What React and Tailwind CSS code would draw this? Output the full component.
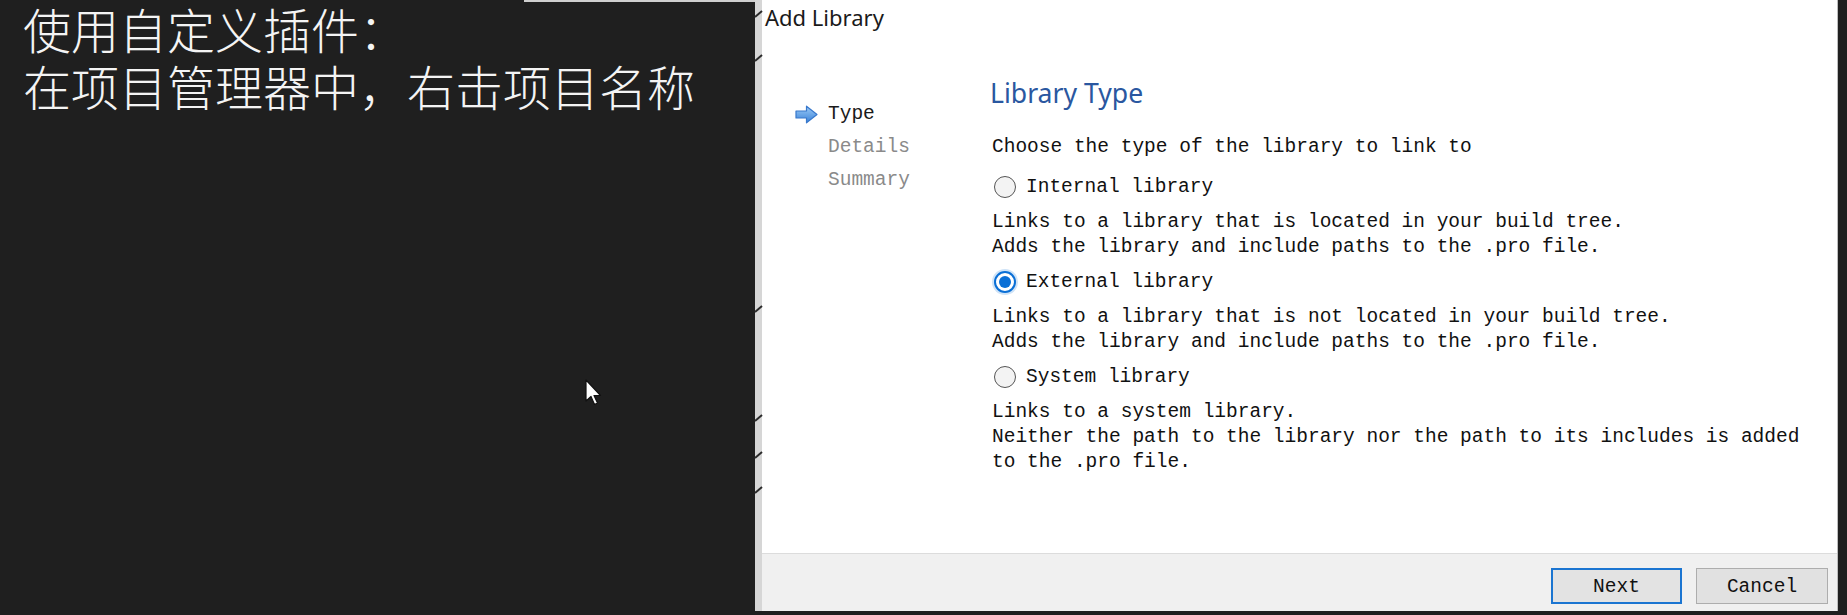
import React from "react";

const mono = { fontFamily: '"Liberation Mono", "DejaVu Sans Mono", monospace' };

function Radio({ checked }) {
  if (checked) {
    return (
      <span className="flex h-[22px] w-[22px] shrink-0 items-center justify-center rounded-full border-2 border-[#0a6fd6] bg-white shadow-[0_0_0_2px_#cfe3f7]">
        <span className="h-[12px] w-[12px] rounded-full bg-[#0a6fd6]" />
      </span>
    );
  }
  return (
    <span className="h-[22px] w-[22px] shrink-0 rounded-full border-[1.5px] border-[#555] bg-[#f3f3f3]" />
  );
}

function Option({ checked, label, lines, mt }) {
  return (
    <>
      <div className={`flex items-center gap-[10px] pl-[2px] leading-[25px] text-[#111] ${mt}`}>
        <Radio checked={checked} />
        <span>{label}</span>
      </div>
      <div className="mt-[10px] leading-[25px] text-[#111]">
        {lines.map((l) => (
          <div key={l} className="whitespace-pre">{l}</div>
        ))}
      </div>
    </>
  );
}

function Tick({ top }) {
  return (
    <svg className="absolute left-[754px]" style={{ top }} width="9" height="8" viewBox="0 0 9 8">
      <path d="M1 7 L8 1" stroke="#2a2a2a" strokeWidth="2" />
    </svg>
  );
}

export default function App() {
  return (
    <div className="relative flex h-[615px] w-[1847px] overflow-hidden bg-[#1f1f1f]">
      {/* left caption panel */}
      <div
        className="w-[755px] shrink-0 pl-[23px] pt-0 text-[48px] leading-[57px] font-light text-[#f4f4f4]"
        style={{ fontFamily: '"Noto Sans CJK SC", "Noto Sans", sans-serif' }}
      >
        <div>使用自定义插件：</div>
        <div>在项目管理器中，右击项目名称</div>
      </div>

      {/* dialog */}
      <div className="flex h-[611px] w-[1083px] shrink-0 border-l-[7px] border-r border-l-[#d6d6d6] border-r-[#bdbdbd] bg-white">
        <div className="flex flex-1 flex-col">
          <div
            className="h-[36px] pl-[3px] text-[22px] leading-[34px] text-[#1a1a1a]"
            style={{ fontFamily: '"Noto Sans", "Open Sans", sans-serif' }}
          >
            Add Library
          </div>
          <div className="flex flex-1 text-[19.5px]" style={mono}>
            {/* nav */}
            <div className="ml-[33px] w-[197px] shrink-0 pt-[62px] leading-[33px]">
              <div className="flex items-center">
                <svg width="23" height="19" viewBox="0 0 23 19" className="mr-[10px]">
                  <defs>
                    <linearGradient id="ag" x1="0" y1="0" x2="0" y2="1">
                      <stop offset="0" stopColor="#9ccbf7" />
                      <stop offset="1" stopColor="#3a82d8" />
                    </linearGradient>
                  </defs>
                  <path d="M1 6 H11.5 V1.2 L22 9.5 L11.5 17.8 V13 H1 Z" fill="url(#ag)" stroke="#3878cc" strokeWidth="1.2" strokeLinejoin="round" />
                </svg>
                <span className="text-[#1a1a1a]">Type</span>
              </div>
              <div className="pl-[33px] text-[#8a8a8a]">Details</div>
              <div className="pl-[33px] text-[#8a8a8a]">Summary</div>
            </div>
            {/* content */}
            <div className="flex-1 pt-[39px]">
              <div
                className="ml-[-2px] text-[26.6px] leading-[36px] text-[#2a57a0]"
                style={{ fontFamily: '"Noto Sans", "Open Sans", sans-serif' }}
              >
                Library Type
              </div>
              <div className="mt-[23.5px] leading-[25px] text-[#111]">Choose the type of the library to link to</div>
              <Option
                mt="mt-[15px]"
                label="Internal library"
                lines={["Links to a library that is located in your build tree.", "Adds the library and include paths to the .pro file."]}
              />
              <Option
                mt="mt-[10px]"
                checked
                label="External library"
                lines={["Links to a library that is not located in your build tree.", "Adds the library and include paths to the .pro file."]}
              />
              <Option
                mt="mt-[10px]"
                label="System library"
                lines={[
                  "Links to a system library.",
                  "Neither the path to the library nor the path to its includes is added",
                  "to the .pro file.",
                ]}
              />
            </div>
          </div>
          {/* footer */}
          <div className="flex h-[58px] shrink-0 items-start justify-end gap-[14px] border-t border-[#dcdcdc] bg-[#f0f0f0] pr-[9px] pt-[14px] text-[19.5px]" style={mono}>
            <button className="h-[36px] w-[131px] border-2 border-[#1b75d1] bg-[#e3e3e3] pt-[3px] text-[#111]">Next</button>
            <button className="h-[36px] w-[132px] border border-[#adadad] bg-[#e1e1e1] pt-[3px] text-[#111]">Cancel</button>
          </div>
        </div>
      </div>

      {/* decorative overlays */}
      <div className="absolute left-[524px] top-0 h-[2px] w-[231px] bg-[#cfcfcf]" />
      <Tick top={10} />
      <Tick top={54} />
      <Tick top={305} />
      <Tick top={414} />
      <Tick top={451} />
      <Tick top={486} />
      <svg className="absolute left-[585px] top-[379px]" width="18" height="28" viewBox="0 0 18 28">
        <path d="M1 1 L1 22 L6 17.5 L9.5 25.5 L12.5 24 L9 16.5 L15.5 16.5 Z" fill="#fff" stroke="#111" strokeWidth="1.2" strokeLinejoin="round" />
      </svg>
    </div>
  );
}
